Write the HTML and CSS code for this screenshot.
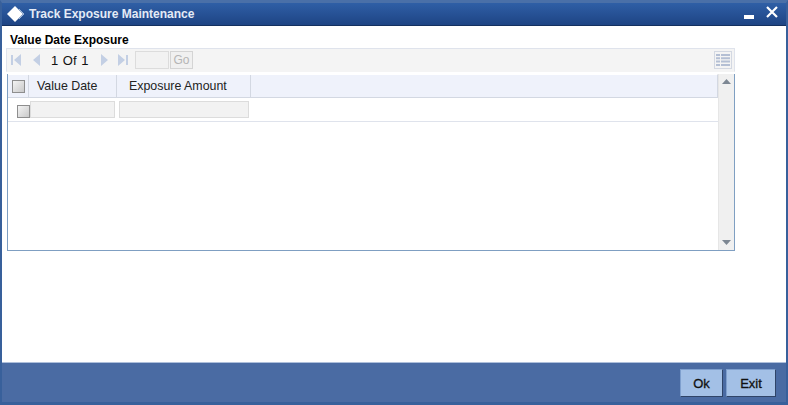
FILE: index.html
```html
<!DOCTYPE html>
<html lang="en">
<head>
<meta charset="utf-8">
<title>Track Exposure Maintenance</title>
<link rel="stylesheet" href="styles.css">
</head>
<body>
<div class="window">
  <header class="titlebar">
    <svg class="logo" width="18" height="16" viewBox="0 0 18 16"><path d="M8 0 16 8 8 16 0 8Z" fill="#fff"/><path d="M12 3 17 8 12 13" fill="none" stroke="#9fb6d8" stroke-width="1"/></svg>
    <span class="title">Track Exposure Maintenance</span>
    <svg class="win-min" width="10" height="4" viewBox="0 0 10 4"><rect width="10" height="4" fill="#fff"/></svg>
    <svg class="win-close" width="12" height="12" viewBox="0 0 12 12"><path d="M1 1 11 11M11 1 1 11" stroke="#fff" stroke-width="2.2" fill="none"/></svg>
  </header>
  <main class="content">
    <h2 class="section">Value Date Exposure</h2>
    <div class="toolbar">
      <svg class="nav nav-first" width="12" height="12" viewBox="0 0 12 12"><path d="M1 1h2v10H1zM11 0v12L4 6z" fill="#c3cfe4"/></svg>
      <svg class="nav nav-prev" width="8" height="12" viewBox="0 0 8 12"><path d="M7 0v12L0 6z" fill="#c3cfe4"/></svg>
      <span class="pager">1 <span class="of">Of</span> 1</span>
      <svg class="nav nav-next" width="8" height="12" viewBox="0 0 8 12"><path d="M1 0v12l7-6z" fill="#c3cfe4"/></svg>
      <svg class="nav nav-last" width="12" height="12" viewBox="0 0 12 12"><path d="M0 0v12l7-6zM8 1h2v10H8z" fill="#c3cfe4"/></svg>
      <span class="page-input"></span>
      <span class="go">Go</span>
      <span class="columns">
        <svg width="14" height="12" viewBox="0 0 14 12"><path d="M0 0h4v2H0zM5 0h9v2H5zM0 3.300h4v2H0zM5 3.300h9v2H5zM0 6.600h4v2H0zM5 6.600h9v2H5zM0 10h4v2H0zM5 10h9v2H5z" fill="#b4bfd4"/></svg>
      </span>
    </div>
    <div class="grid">
      <div class="grid-body">
        <div class="head-row">
          <div class="head-check"><span class="check check-head"></span></div>
          <div class="head-cell head-date">Value Date</div>
          <div class="head-cell head-amount">Exposure Amount</div>
        </div>
        <div class="data-row">
          <span class="check check-row"></span>
          <span class="field field-date"></span>
          <span class="field field-amount"></span>
        </div>
      </div>
      <div class="scrollbar">
        <svg width="9" height="5" viewBox="0 0 9 5"><path d="M4.500 0 9 5H0z" fill="#7d8793"/></svg>
        <svg width="9" height="5" viewBox="0 0 9 5"><path d="M0 0h9L4.500 5z" fill="#7d8793"/></svg>
      </div>
    </div>
  </main>
  <footer class="footer">
    <button class="btn" type="button">Ok</button>
    <button class="btn" type="button">Exit</button>
  </footer>
</div>
</body>
</html>
```
FILE: styles.css
```css
* { box-sizing: border-box; }
html, body { margin: 0; height: 100%; }
body { font-family: "Liberation Sans", Arial, sans-serif; overflow: hidden; background: #fff; }

.window {
  width: 788px;
  height: 405px;
  display: flex;
  flex-direction: column;
  border-left: 2px solid #38609b;
  border-right: 2px solid #38609b;
  border-bottom: 3px solid #38609b;
  border-top: 3px solid #4a70a8;
}

.titlebar {
  height: 23px;
  flex: none;
  display: flex;
  align-items: center;
  padding: 0 8px 0 5px;
  background: linear-gradient(#2f5fa6, #1e4484);
  border-bottom: 1px solid #14305f;
  color: #fff;
}
.logo { flex: none; }
.title { margin-left: 4px; font-size: 12px; font-weight: bold; color: #e4ebf6; flex: 1; }
.win-min { margin-top: 5px; margin-right: 12px; margin-left: 0; }
.win-close { margin-top: -4px; }

.content { flex: 1; padding: 0 0 0 4px; min-height: 0; }
.section { margin: 6px 0 0 4px; font-size: 12px; line-height: 16px; font-weight: bold; color: #000; height: 16px; }

.toolbar {
  width: 729px;
  height: 24px;
  display: flex;
  align-items: center;
  background: #f4f4f4;
  border: 1px solid #dfe3ec;
  border-bottom-color: #f4f4f4;
}
.nav { flex: none; }
.nav-first { margin-left: 3px; }
.nav-prev { margin-left: 11px; }
.pager { margin-left: 10px; width: 38px; font-size: 13px; color: #111; white-space: nowrap; }
.of { margin: 0 1px; }
.nav-next { margin-left: 11px; }
.nav-last { margin-left: 10px; }
.page-input { width: 34px; height: 18px; margin-left: 5px; background: #f2f2f2; border: 1px solid #dcdcdc; }
.go {
  width: 23px; height: 18px; margin-left: 1px;
  border: 1px solid #d4d4d4; background: #f0f0f0;
  font-size: 12px; line-height: 17px; text-align: center; color: #b5b5b5;
}
.columns {
  width: 18px; height: 18px; margin-left: auto; margin-right: 2px;
  border: 1px solid #d3d8e2; background: #f4f4f4;
  display: flex; align-items: center; justify-content: center;
  overflow: hidden;
}

.grid {
  width: 728px;
  height: 177px;
  margin-left: 1px;
  margin-top: 2px;
  display: flex;
  border-left: 1px solid #7f9fc2;
  border-right: 1px solid #7f9fc2;
  border-bottom: 1px solid #7f9fc2;
}
.grid-body { flex: 1; min-width: 0; }
.head-row {
  height: 24px;
  display: flex;
  background: #eff2fb;
  border-top: 1px solid #fff;
  border-bottom: 1px solid #d3d8e2;
  border-right: 1px solid #d3d8e2;
}
.head-check { width: 21px; display: flex; align-items: center; justify-content: center; border-right: 1px solid #d3d8e2; padding-left: 1px; }
.head-cell { font-size: 12.400px; line-height: 23px; color: #222; border-right: 1px solid #d3d8e2; }
.head-date { width: 88px; padding-left: 8px; }
.head-amount { width: 134px; padding-left: 12px; }

.check {
  display: block;
  width: 13px; height: 13px;
  border: 1px solid #8e8e8e;
  background: linear-gradient(135deg, #f4f4f4, #c9c9c9);
}
.data-row {
  height: 24px;
  display: flex;
  align-items: flex-start;
  padding-top: 3px;
  border-bottom: 1px solid #dfe3ec;
}
.check-row { margin-left: 9px; margin-top: 4px; flex: none; }
.field { height: 17px; background: #f2f2f2; border: 1px solid #dcdcdc; flex: none; }
.field-date { width: 85px; margin-left: 0; }
.field-amount { width: 130px; margin-left: 4px; }

.scrollbar {
  width: 16px;
  flex: none;
  background: #f0f0f0;
  border-left: 1px solid #e6e6e6;
  display: flex;
  flex-direction: column;
  justify-content: space-between;
  align-items: center;
  padding: 5px 0;
}

.footer {
  height: 40px;
  flex: none;
  display: flex;
  justify-content: flex-end;
  align-items: flex-start;
  gap: 3px;
  padding: 6px 10px 0 0;
  background: #4a6ba3;
  border-top: 1px solid #aebfdb;
}
.btn {
  width: 43px;
  height: 28px;
  padding: 0;
  font-family: inherit;
  font-size: 13px;
  font-weight: normal;
  -webkit-text-stroke: 0.3px #111;
  color: #111;
  background: #a3c0e6;
  border: 1px solid;
  border-color: #7e9fce #2f4468 #2f4468 #7e9fce;
}
.btn + .btn { width: 50px; }
```
